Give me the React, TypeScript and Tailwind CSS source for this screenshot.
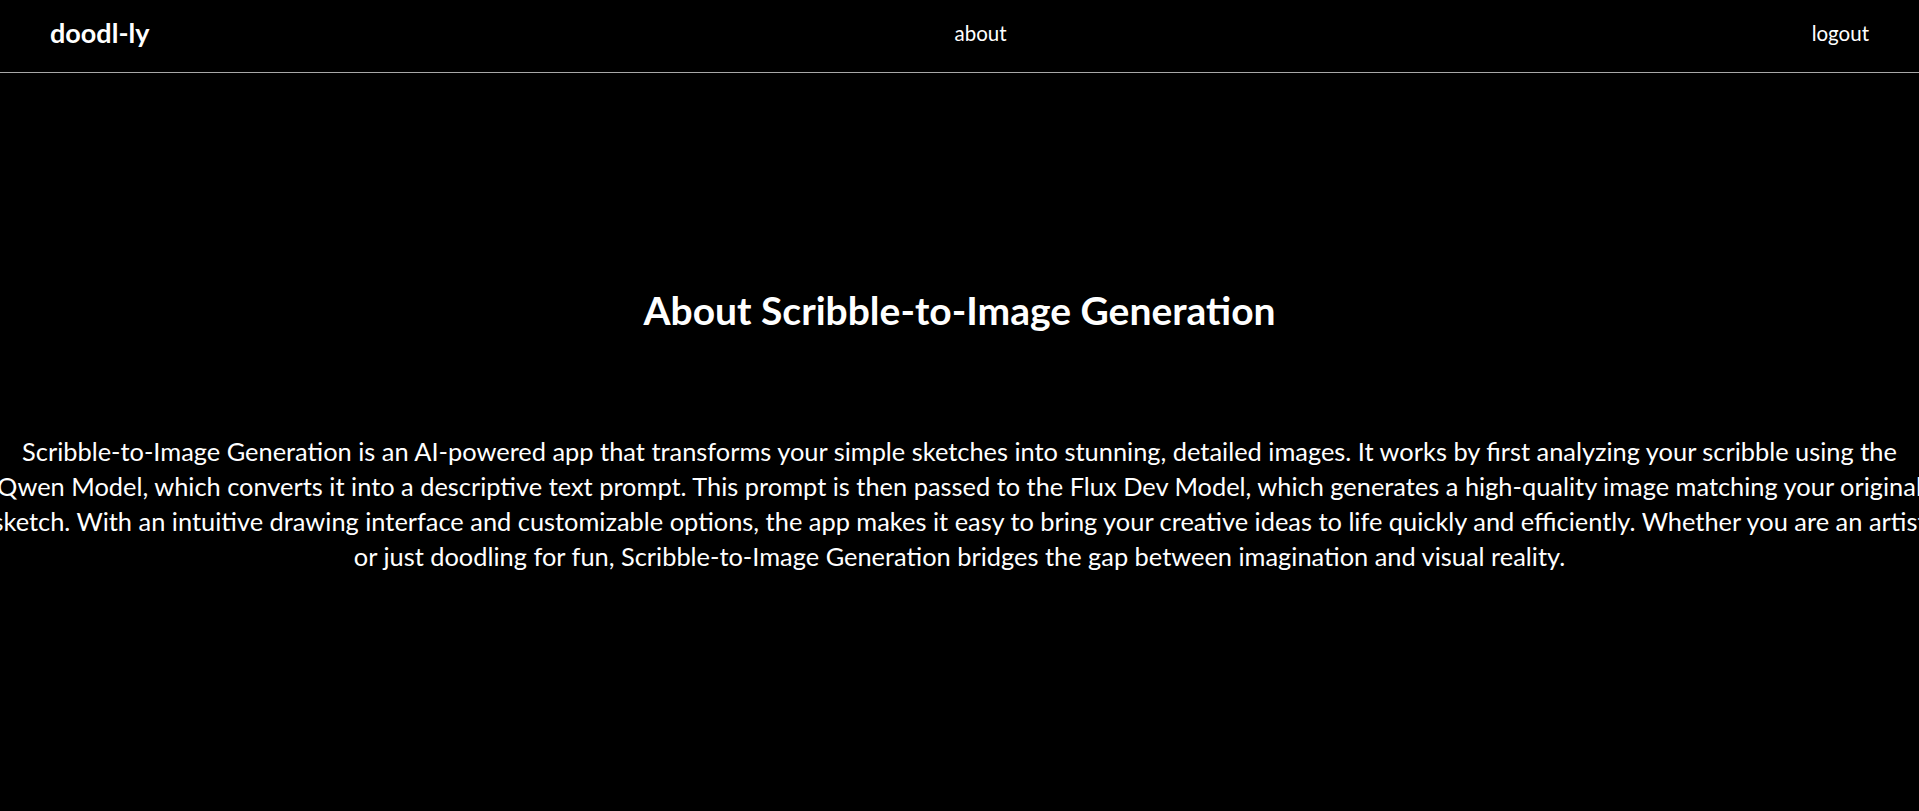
import React from "react";

const lines = [
  "Scribble-to-Image Generation is an AI-powered app that transforms your simple sketches into stunning, detailed images. It works by first analyzing your scribble using the",
  "Qwen Model, which converts it into a descriptive text prompt. This prompt is then passed to the Flux Dev Model, which generates a high-quality image matching your original",
  "sketch. With an intuitive drawing interface and customizable options, the app makes it easy to bring your creative ideas to life quickly and efficiently. Whether you are an artist",
  "or just doodling for fun, Scribble-to-Image Generation bridges the gap between imagination and visual reality.",
];

const App = () => {
  return (
    <div className="min-h-screen overflow-hidden bg-black font-['Segoe_UI','Lato',sans-serif] text-white">
      {/* Navbar */}
      <nav className="flex h-[73px] items-center justify-between border-b border-[#a8a8a8] px-[50px] pb-[6px]">
        <span className="text-[27px] font-bold">doodl-ly</span>
        <span className="text-[20.5px]">about</span>
        <span className="text-[20.5px]">logout</span>
      </nav>
      {/* About */}
      <main className="flex flex-col items-center pt-[213px]">
        <h1 className="text-[39px] font-bold leading-[48px]">
          About Scribble-to-Image Generation
        </h1>
        <p className="mt-[100px] whitespace-nowrap text-center text-[25.4px] leading-[35px]">
          {lines.map((line, i) => (
            <React.Fragment key={i}>
              {line}
              {i < lines.length - 1 && <br />}
            </React.Fragment>
          ))}
        </p>
      </main>
    </div>
  );
};

export default App;
